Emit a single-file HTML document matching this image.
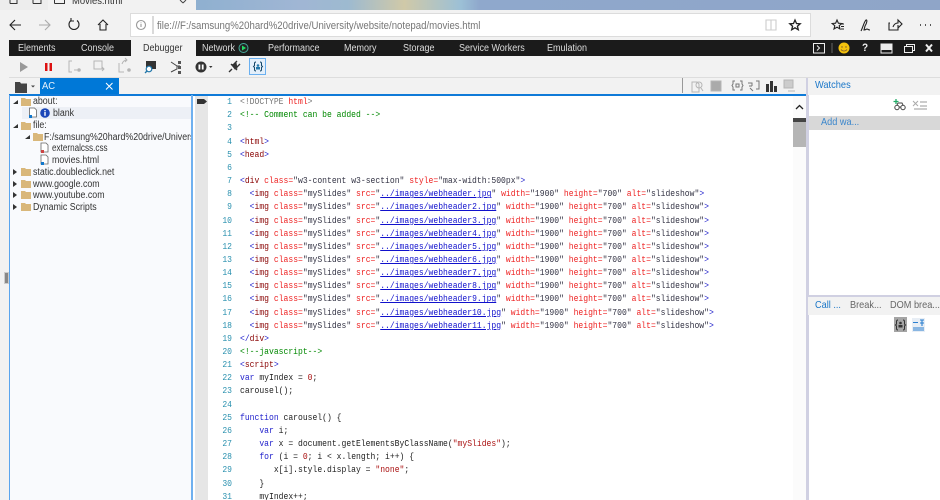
<!DOCTYPE html>
<html><head><meta charset="utf-8"><style>
html,body{margin:0;padding:0;width:940px;height:500px;overflow:hidden;background:#fff}
#w{position:relative;width:940px;height:500px;overflow:hidden;font-family:"Liberation Sans",sans-serif;filter:blur(.35px)}
.a{position:absolute}
.t{position:absolute;white-space:nowrap;font-size:9.800px;line-height:12px;color:#333;transform:scaleX(.9);transform-origin:0 0;margin-top:1.300px}
.m{position:absolute;white-space:nowrap;font-size:9.900px;line-height:14px;color:#ddd;transform:scaleX(.91);transform-origin:0 0;margin-top:1px}
.c{position:absolute;left:240px;white-space:pre;font:9px/13px "Liberation Mono",monospace;color:#222;transform:scaleX(.895);transform-origin:0 0;margin-top:.7px}
.n{position:absolute;left:210px;width:22px;text-align:right;font:9px/13px "Liberation Mono",monospace;color:#2b91af;transform:scaleX(.895);transform-origin:100% 0;margin-top:.7px}
b{font-weight:normal}
.b{color:#22c}.r{color:#800}.x{color:#e22}.s{color:#334}.l{color:#11c;text-decoration:underline}.g{color:#080}.q{color:#a11}
svg{position:absolute;overflow:visible}
</style></head><body><div id="w">
<div class="a" style="left:0;top:0;width:940px;height:10px;background:linear-gradient(90deg,#8fb0d0 0,#8fb0d0 21%,#a0b6d4 32%,#9dbad0 37%,#d0c9a8 43%,#9cc0d6 49%,#8fa8cc 51%,#8fa5c8 100%)"></div>
<div class="a" style="left:0;top:0;width:48px;height:10px;background:#ededed"></div>
<div class="a" style="left:48px;top:0;width:148px;height:10px;background:#f2f2f2"></div>
<svg style="left:0;top:0" width="200" height="10" fill="none" stroke="#333"><path d="M10 3.500h7V0M10 3.500V0M33 3.500h8V0M33 3.500V0M54.500 3.500h10V0M54.500 3.500V0"/><path d="M180 0l3 3M186 0l-3 3" stroke="#444"/></svg>
<div class="t" style="left:72px;top:-5px;color:#333;font-size:10.500px;margin-top:0">Movies.html</div>
<div class="a" style="left:0;top:10px;width:940px;height:30px;background:#f2f2f2"></div>
<div class="a" style="left:130px;top:13px;width:679px;height:22px;background:#fff;border:1px solid #dcdcdc"></div>
<div class="t" style="left:157px;top:19px;font-size:10.700px;color:#777">file:///F:/samsung%20hard%20drive/University/website/notepad/movies.html</div>
<svg style="left:0;top:0" width="940" height="40" fill="none" stroke="#222" stroke-width="1.1">
<path d="M21 25H10M15 20l-5 5 5 5"/><path d="M39 25h11M45 20l5 5-5 5" stroke="#aaa"/>
<path d="M77 20.500a5 5 0 1 1-6 0M71 18v3h3"/><path d="M98 25l5-5 5 5M100 24v6h6v-6"/>
<circle cx="141" cy="25" r="4.500" stroke="#999"/><path d="M141 24v3M141 22.500v.8" stroke="#999"/><path d="M153 16v18" stroke="#bbb"/>
<path d="M766 20h10v10h-10zM771 20v10" stroke="#ccc"/>
<path d="M795 20l1.500 3.500 3.700.3-2.800 2.400.9 3.600-3.300-2-3.300 2 .9-3.600-2.800-2.400 3.700-.3z" stroke-width="1.300"/>
<path d="M837 20l1.400 3.200 3.400.3-2.600 2.200.8 3.300-3-1.800-3 1.800.8-3.300-2.600-2.200 3.400-.3zM841 24h3M841 26.500h3M841 29h3"/>
<path d="M861 31c2-4 3-9 5-11 1.500-.5 1 3-1 6l-1 4c2 0 2-1 3-1s1 1 3 1"/>
<path d="M890 23h-1v7h9v-4M893 27c1-3 3-4 5-4v-3l4 4-4 4v-3"/>
<path d="M920 25h1M925 25h1M930 25h1" stroke-width="1.400"/>
</svg>
<div class="a" style="left:0;top:40px;width:9px;height:460px;background:#f2f2f2"></div>
<div class="a" style="left:9px;top:40px;width:931px;height:16px;background:#1b1b1b"></div>
<div class="a" style="left:131px;top:38.500px;width:65px;height:17.500px;background:#f2f2f2"></div>
<div class="m" style="left:18px;top:41px">Elements</div>
<div class="m" style="left:81px;top:41px">Console</div>
<div class="m" style="left:143px;top:41px;color:#333">Debugger</div>
<div class="m" style="left:202px;top:41px">Network</div>
<svg style="left:238px;top:42px" width="12" height="12"><circle cx="5.500" cy="6" r="4.500" fill="#222" stroke="#4a9" stroke-width="1"/><path d="M4 3.500l4 2.500-4 2.500z" fill="#2d6"/></svg>
<div class="m" style="left:268px;top:41px">Performance</div>
<div class="m" style="left:344px;top:41px">Memory</div>
<div class="m" style="left:403px;top:41px">Storage</div>
<div class="m" style="left:459px;top:41px">Service Workers</div>
<div class="m" style="left:547px;top:41px">Emulation</div>
<svg style="left:810px;top:40px" width="130" height="16" fill="none" stroke="#eee">
<rect x="3.500" y="3.500" width="11" height="9.500" stroke-width="1"/><path d="M7 5.500l2.500 2.500L7 10.500" stroke-width="1"/><path d="M22 3v10" stroke="#666"/>
<circle cx="34" cy="8" r="5.500" fill="#f4c20d" stroke="none"/><circle cx="32" cy="7" r=".7" fill="#753" stroke="none"/><circle cx="36" cy="7" r=".7" fill="#753" stroke="none"/><path d="M31 9.500c1.500 2 4.500 2 6 0" stroke="#753" stroke-width=".7"/>
<rect x="71" y="4" width="11" height="9" fill="#1b1b1b"/><rect x="71" y="4" width="11" height="6" fill="#eee" stroke="none"/>
<rect x="94.500" y="6.500" width="8" height="6"/><path d="M96.500 6.500V4.500h8v6h-2"/>
<path d="M116 4.500l6 7M122 4.500l-6 7" stroke-width="2"/>
</svg>
<div class="m" style="left:862px;top:40px;color:#eee;font-weight:bold;font-size:11px">?</div>
<div class="a" style="left:9px;top:56px;width:931px;height:38px;background:#f2f2f2"></div>
<div class="a" style="left:9px;top:77px;width:931px;height:1px;background:#ddd"></div>
<svg style="left:0;top:55px" width="300" height="24" fill="none" stroke="#b5b5b5">
<path d="M20 7l8 5-8 5z" fill="#999" stroke="none"/>
<rect x="45" y="8" width="2.500" height="8" fill="#d11" stroke="none"/><rect x="49.500" y="8" width="2.500" height="8" fill="#d11" stroke="none"/>
<path d="M72 6h-3v11h3M74 15h3"/><circle cx="79" cy="15" r="1.300" fill="#b5b5b5"/>
<rect x="94" y="6" width="8" height="8"/><path d="M98 14h6M102 12l2 2-2 2"/>
<path d="M119 8v9h5M122 9c1-3 3-4 5-4M125 3l2 2-2 2"/><circle cx="129" cy="15" r="1.300" fill="#b5b5b5"/>
<rect x="146" y="6" width="10" height="8" fill="#333" stroke="none"/><circle cx="149" cy="14" r="2.800" fill="#fff" stroke="#27a" stroke-width="1.200"/><path d="M147 16l-2 2" stroke="#27a" stroke-width="1.300"/>
<path d="M171 7l6 4 0 3-6 3M177 11h3" stroke="#444"/><rect x="178" y="6" width="3" height="3" fill="#555" stroke="none"/><rect x="178" y="11" width="3" height="3" fill="#555" stroke="none"/><rect x="178" y="16" width="3" height="3" fill="#555" stroke="none"/>
<circle cx="201" cy="12" r="5.500" fill="#333" stroke="none"/><rect x="198.500" y="9.500" width="1.800" height="5" fill="#fff" stroke="none"/><rect x="201.800" y="9.500" width="1.800" height="5" fill="#fff" stroke="none"/><path d="M209 11h3.500l-1.700 2z" fill="#333" stroke="none"/>
<path d="M229 17l3-3M231 9l6 6M237 6l-3 3M240 9l-3 3" stroke="#333" stroke-width="1.400"/><path d="M232 10l4-2 1 5-2 1z" fill="#333" stroke="#333"/>
<rect x="249.500" y="3.500" width="16" height="16" fill="#e4effa" stroke="#6ab0f0"/><path d="M256 7c-1 0-1.500.5-1.500 1.500v2l-1 1 1 1v2c0 1 .5 1.500 1.500 1.500M260 7c1 0 1.500.5 1.500 1.500v2l1 1-1 1v2c0 1-.5 1.500-1.500 1.500" stroke="#146"/><circle cx="258" cy="10.500" r="1.300" fill="#27a" stroke="none"/><rect x="256" y="12" width="4" height="2.500" fill="#27a" stroke="none"/>
</svg>
<svg style="left:9px;top:78px" width="30" height="16"><path d="M6 4h5l1 1.500h6V15H6z" fill="#444"/><path d="M22 7.500h4l-2 2z" fill="#444"/></svg>
<div class="a" style="left:40px;top:78px;width:79px;height:16px;background:#0078d7"></div>
<div class="t" style="left:42px;top:80px;color:#e8f2fb;font-size:10.500px;margin-top:0">AC</div>
<svg style="left:105px;top:82px" width="9" height="9" stroke="#fff" stroke-width="1"><path d="M1 1l6.500 6.500M7.500 1L1 7.500"/></svg>
<div class="a" style="left:9px;top:94px;width:797px;height:1.500px;background:#0f7ad8"></div>
<div class="a" style="left:9px;top:95px;width:1px;height:405px;background:#5aa5ee"></div>
<div class="a" style="left:10px;top:95.500px;width:181px;height:405px;background:#f9fafd"></div>
<div class="a" style="left:191px;top:95px;width:2px;height:405px;background:#6fb0ef"></div>
<div class="a" style="left:4px;top:272px;width:3px;height:10px;background:#888;border:.5px solid #ccc"></div>
<div class="a" style="left:22px;top:107px;width:169px;height:12px;background:#edf0f6"></div>
<svg style="left:0;top:95px" width="192" height="125">
<g fill="#d9b77a"><path d="M21 3h4l1 1h5v7H21z"/>
<path d="M21 27h4l1 1h5v7H21z"/><path d="M33 38h4l1 1h5v7H33z"/>
<path d="M21 73h4l1 1h5v7H21z"/><path d="M21 85h4l1 1h5v7H21z"/><path d="M21 96h4l1 1h5v7H21z"/><path d="M21 108h4l1 1h5v7H21z"/></g>
<g fill="#333"><path d="M13 9l5-4v4z"/><path d="M13 33l5-4v4z"/><path d="M25 44l5-4v4z"/>
<path d="M13 74l4 3-4 3z"/><path d="M13 86l4 3-4 3z"/><path d="M13 97l4 3-4 3z"/><path d="M13 109l4 3-4 3z"/></g>
<g fill="#fff" stroke="#666" stroke-width=".8"><path d="M29.500 13h5l2 2v7h-7z"/><path d="M41 48h5l2 2v7h-7z"/><path d="M41 60h5l2 2v7h-7z"/></g>
<rect x="29" y="20" width="3" height="3" fill="#17c"/><rect x="41" y="55" width="3" height="3" fill="#c44"/><rect x="41" y="67" width="3" height="3" fill="#17c"/>
<circle cx="45" cy="18" r="4.800" fill="#1b46b8"/><rect x="44.300" y="17" width="1.400" height="3.800" fill="#fff"/><rect x="44.300" y="15" width="1.400" height="1.300" fill="#fff"/>
</svg>
<div class="t" style="left:33px;top:95px">about:</div>
<div class="t" style="left:53px;top:107px">blank</div>
<div class="t" style="left:33px;top:119px">file:</div>
<div class="a" style="left:44px;top:131px;width:147px;height:14px;overflow:hidden"><div class="t" style="left:0;top:0">F:/samsung%20hard%20drive/University/website</div></div>
<div class="t" style="left:52px;top:142px;transform:scaleX(.83)">externalcss.css</div>
<div class="t" style="left:52px;top:154px">movies.html</div>
<div class="t" style="left:33px;top:166px">static.doubleclick.net</div>
<div class="t" style="left:33px;top:178px">www.google.com</div>
<div class="t" style="left:33px;top:189px">www.youtube.com</div>
<div class="t" style="left:33px;top:201px">Dynamic Scripts</div>
<div class="a" style="left:195px;top:96px;width:13px;height:404px;background:#e6e6e6"></div>
<svg style="left:196px;top:98px" width="12" height="8"><path d="M1 1h7l3 2.500L8 6H1z" fill="#333"/></svg>
<div class="n" style="top:95.500px">1</div><div class="n" style="top:108.650px">2</div><div class="n" style="top:121.800px">3</div><div class="n" style="top:134.950px">4</div><div class="n" style="top:148.100px">5</div><div class="n" style="top:161.250px">6</div><div class="n" style="top:174.400px">7</div><div class="n" style="top:187.550px">8</div><div class="n" style="top:200.700px">9</div><div class="n" style="top:213.850px">10</div><div class="n" style="top:227px">11</div><div class="n" style="top:240.150px">12</div><div class="n" style="top:253.300px">13</div><div class="n" style="top:266.450px">14</div><div class="n" style="top:279.600px">15</div><div class="n" style="top:292.750px">16</div><div class="n" style="top:305.900px">17</div><div class="n" style="top:319.050px">18</div><div class="n" style="top:332.200px">19</div><div class="n" style="top:345.350px">20</div><div class="n" style="top:358.500px">21</div><div class="n" style="top:371.650px">22</div><div class="n" style="top:384.800px">23</div><div class="n" style="top:397.950px">24</div><div class="n" style="top:411.100px">25</div><div class="n" style="top:424.250px">26</div><div class="n" style="top:437.400px">27</div><div class="n" style="top:450.550px">28</div><div class="n" style="top:463.700px">29</div><div class="n" style="top:476.850px">30</div><div class="n" style="top:490px">31</div>
<div class="c" style="top:95.500px;color:#777">&lt;!DOCTYPE <b style="color:#e22">html</b>&gt;</div>
<div class="c g" style="top:108.650px">&lt;!-- Comment can be added --&gt;</div>
<div class="c" style="top:134.950px"><b class="b">&lt;</b><b class="r">html</b><b class="b">&gt;</b></div>
<div class="c" style="top:148.100px"><b class="b">&lt;</b><b class="r">head</b><b class="b">&gt;</b></div>
<div class="c" style="top:174.400px"><b class="b">&lt;</b><b class="r">div</b> <b class="x">class=</b><b class="s">"w3-content w3-section"</b> <b class="x">style=</b><b class="s">"max-width:500px"</b><b class="b">&gt;</b></div>
<div class="c" style="top:187.550px">  <b class="b">&lt;</b><b class="r">img</b> <b class="x">class=</b><b class="s">"mySlides"</b> <b class="x">src=</b><b class="s">"</b><b class="l">../images/webheader.jpg</b><b class="s">"</b> <b class="x">width=</b><b class="s">"1900"</b> <b class="x">height=</b><b class="s">"700"</b> <b class="x">alt=</b><b class="s">"slideshow"</b><b class="b">&gt;</b></div>
<div class="c" style="top:200.700px">  <b class="b">&lt;</b><b class="r">img</b> <b class="x">class=</b><b class="s">"mySlides"</b> <b class="x">src=</b><b class="s">"</b><b class="l">../images/webheader2.jpg</b><b class="s">"</b> <b class="x">width=</b><b class="s">"1900"</b> <b class="x">height=</b><b class="s">"700"</b> <b class="x">alt=</b><b class="s">"slideshow"</b><b class="b">&gt;</b></div>
<div class="c" style="top:213.850px">  <b class="b">&lt;</b><b class="r">img</b> <b class="x">class=</b><b class="s">"mySlides"</b> <b class="x">src=</b><b class="s">"</b><b class="l">../images/webheader3.jpg</b><b class="s">"</b> <b class="x">width=</b><b class="s">"1900"</b> <b class="x">height=</b><b class="s">"700"</b> <b class="x">alt=</b><b class="s">"slideshow"</b><b class="b">&gt;</b></div>
<div class="c" style="top:227px">  <b class="b">&lt;</b><b class="r">img</b> <b class="x">class=</b><b class="s">"mySlides"</b> <b class="x">src=</b><b class="s">"</b><b class="l">../images/webheader4.jpg</b><b class="s">"</b> <b class="x">width=</b><b class="s">"1900"</b> <b class="x">height=</b><b class="s">"700"</b> <b class="x">alt=</b><b class="s">"slideshow"</b><b class="b">&gt;</b></div>
<div class="c" style="top:240.150px">  <b class="b">&lt;</b><b class="r">img</b> <b class="x">class=</b><b class="s">"mySlides"</b> <b class="x">src=</b><b class="s">"</b><b class="l">../images/webheader5.jpg</b><b class="s">"</b> <b class="x">width=</b><b class="s">"1900"</b> <b class="x">height=</b><b class="s">"700"</b> <b class="x">alt=</b><b class="s">"slideshow"</b><b class="b">&gt;</b></div>
<div class="c" style="top:253.300px">  <b class="b">&lt;</b><b class="r">img</b> <b class="x">class=</b><b class="s">"mySlides"</b> <b class="x">src=</b><b class="s">"</b><b class="l">../images/webheader6.jpg</b><b class="s">"</b> <b class="x">width=</b><b class="s">"1900"</b> <b class="x">height=</b><b class="s">"700"</b> <b class="x">alt=</b><b class="s">"slideshow"</b><b class="b">&gt;</b></div>
<div class="c" style="top:266.450px">  <b class="b">&lt;</b><b class="r">img</b> <b class="x">class=</b><b class="s">"mySlides"</b> <b class="x">src=</b><b class="s">"</b><b class="l">../images/webheader7.jpg</b><b class="s">"</b> <b class="x">width=</b><b class="s">"1900"</b> <b class="x">height=</b><b class="s">"700"</b> <b class="x">alt=</b><b class="s">"slideshow"</b><b class="b">&gt;</b></div>
<div class="c" style="top:279.600px">  <b class="b">&lt;</b><b class="r">img</b> <b class="x">class=</b><b class="s">"mySlides"</b> <b class="x">src=</b><b class="s">"</b><b class="l">../images/webheader8.jpg</b><b class="s">"</b> <b class="x">width=</b><b class="s">"1900"</b> <b class="x">height=</b><b class="s">"700"</b> <b class="x">alt=</b><b class="s">"slideshow"</b><b class="b">&gt;</b></div>
<div class="c" style="top:292.750px">  <b class="b">&lt;</b><b class="r">img</b> <b class="x">class=</b><b class="s">"mySlides"</b> <b class="x">src=</b><b class="s">"</b><b class="l">../images/webheader9.jpg</b><b class="s">"</b> <b class="x">width=</b><b class="s">"1900"</b> <b class="x">height=</b><b class="s">"700"</b> <b class="x">alt=</b><b class="s">"slideshow"</b><b class="b">&gt;</b></div>
<div class="c" style="top:305.900px">  <b class="b">&lt;</b><b class="r">img</b> <b class="x">class=</b><b class="s">"mySlides"</b> <b class="x">src=</b><b class="s">"</b><b class="l">../images/webheader10.jpg</b><b class="s">"</b> <b class="x">width=</b><b class="s">"1900"</b> <b class="x">height=</b><b class="s">"700"</b> <b class="x">alt=</b><b class="s">"slideshow"</b><b class="b">&gt;</b></div>
<div class="c" style="top:319.050px">  <b class="b">&lt;</b><b class="r">img</b> <b class="x">class=</b><b class="s">"mySlides"</b> <b class="x">src=</b><b class="s">"</b><b class="l">../images/webheader11.jpg</b><b class="s">"</b> <b class="x">width=</b><b class="s">"1900"</b> <b class="x">height=</b><b class="s">"700"</b> <b class="x">alt=</b><b class="s">"slideshow"</b><b class="b">&gt;</b></div>
<div class="c" style="top:332.200px"><b class="b">&lt;/</b><b class="r">div</b><b class="b">&gt;</b></div>
<div class="c g" style="top:345.350px">&lt;!--javascript--&gt;</div>
<div class="c" style="top:358.500px"><b class="b">&lt;</b><b class="r">script</b><b class="b">&gt;</b></div>
<div class="c" style="top:371.650px"><b class="b">var</b> myIndex = <b class="q">0</b>;</div>
<div class="c" style="top:384.800px">carousel();</div>
<div class="c" style="top:411.100px"><b class="b">function</b> carousel() {</div>
<div class="c" style="top:424.250px">    <b class="b">var</b> i;</div>
<div class="c" style="top:437.400px">    <b class="b">var</b> x = document.getElementsByClassName(<b class="q">"mySlides"</b>);</div>
<div class="c" style="top:450.550px">    <b class="b">for</b> (i = <b class="q">0</b>; i &lt; x.length; i++) {</div>
<div class="c" style="top:463.700px">       x[i].style.display = <b class="q">"none"</b>;</div>
<div class="c" style="top:476.850px">    }</div>
<div class="c" style="top:490px">    myIndex++;</div>
<div class="a" style="left:793px;top:96px;width:13px;height:404px;background:#fbfbfb"></div>
<svg style="left:795px;top:104px" width="10" height="7" fill="none" stroke="#222" stroke-width="1.300"><path d="M1 5l3.500-3.500L8 5"/></svg>
<div class="a" style="left:793px;top:118px;width:13px;height:29px;background:#b5b5b5"></div>
<div class="a" style="left:793px;top:118px;width:13px;height:4px;background:#444"></div>
<div class="a" style="left:682px;top:78px;width:1px;height:15px;background:#999"></div>
<svg style="left:690px;top:79px" width="115" height="14" fill="none" stroke="#b5b5b5" stroke-width="1">
<path d="M2 3h5l2 2v8H2z"/><circle cx="9" cy="6" r="3"/><path d="M11 9l2 3"/>
<path d="M21 2h10v10H21z" fill="#aaa"/>
<path d="M45 2h-2v3l-1 1.500 1 1.500v3h2M50 2h2v3l1 1.500-1 1.500v3h-2" stroke="#777"/><rect x="46" y="5" width="3" height="3" stroke="#777"/>
<path d="M58 4h4v3M66 2h3v8h-3M60 9l3 3M62 7h-3" stroke="#777"/>
<rect x="76" y="5" width="3" height="8" fill="#333" stroke="none"/><rect x="80" y="2" width="3" height="11" fill="#333" stroke="none"/><rect x="84" y="7" width="3" height="6" fill="#333" stroke="none"/>
<rect x="94" y="1" width="9" height="8" fill="#ccc"/><path d="M98 12h7"/>
</svg>
<div class="a" style="left:806px;top:78px;width:2.500px;height:422px;background:#d0d0e2"></div>
<div class="a" style="left:808px;top:78px;width:132px;height:17px;background:#f2f2f2"></div>
<div class="t" style="left:815px;top:80px;color:#1976c8;font-size:10.300px;margin-top:0">Watches</div>
<svg style="left:893px;top:98px" width="36" height="14" fill="none" stroke="#444">
<path d="M3 1v5M.5 3.500h5" stroke="#2a6" stroke-width="1.300"/><circle cx="4" cy="9.500" r="2.200"/><circle cx="10" cy="9.500" r="2.200"/><path d="M4 7l1-2h4l1 2M6 9h2"/>
<path d="M20 3l5 5M25 3l-5 5" stroke="#aaa"/><path d="M27 4h7M27 8h7M21 11h13" stroke="#999"/>
</svg>
<div class="a" style="left:809px;top:116px;width:131px;height:14px;background:#d8d8d8"></div>
<div class="t" style="left:821px;top:116px;color:#3a86cc;font-size:10.200px">Add wa...</div>
<div class="a" style="left:808px;top:295px;width:132px;height:2px;background:#d0d0e2"></div>
<div class="a" style="left:808px;top:297px;width:132px;height:18px;background:#f2f2f2"></div>
<div class="t" style="left:815px;top:299px;color:#1976c8;font-size:10.200px">Call ...</div>
<div class="t" style="left:850px;top:299px;color:#666;font-size:10.200px">Break...</div>
<div class="t" style="left:890px;top:299px;color:#666;font-size:10.200px">DOM brea...</div>
<div class="a" style="left:894px;top:317px;width:13px;height:15px;background:#a5a5a5"></div>
<svg style="left:894px;top:317px" width="13" height="15" fill="none" stroke="#333"><path d="M4 3c-1 0-1.500.5-1.500 1.500V7l-1 1 1 1v2.500c0 1 .5 1.500 1.500 1.500M9 3c1 0 1.500.5 1.500 1.500V7l1 1-1 1v2.500c0 1-.5 1.500-1.500 1.500"/><circle cx="6.500" cy="6" r="1.300" fill="#333" stroke="none"/><rect x="4.500" y="8" width="4" height="2.500" fill="#333" stroke="none"/></svg>
<div class="a" style="left:912px;top:318px;width:13px;height:14px;background:#e8eef5"></div>
<svg style="left:912px;top:318px" width="13" height="14" fill="none" stroke="#2a7fd0" stroke-width="1.100"><path d="M1 4.500h5M8 2h4M10 2v6M8 5h4M1 10h11M1 12h11"/></svg>
</div></body></html>
